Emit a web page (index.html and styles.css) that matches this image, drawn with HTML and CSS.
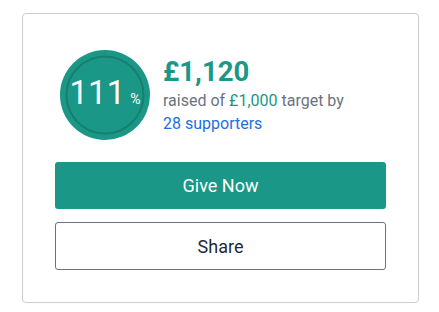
FILE: index.html
```html
<!DOCTYPE html>
<html>
<head>
<meta charset="utf-8">
<link rel="stylesheet" href="styles.css">
</head>
<body>
<div class="card">
  <div class="summary">
    <div class="progress">
      <svg class="ring" width="100" height="100" viewBox="0 0 100 100">
        <circle cx="50" cy="50" r="45" fill="#1a9786"/>
        <circle cx="50" cy="50" r="38.5" fill="none" stroke="#15806f" stroke-width="2"/>
      </svg>
      <div class="pct"><span class="num">111</span><span class="sign">%</span></div>
    </div>
    <div class="totals">
      <div class="amount">£1,120</div>
      <div class="line">raised of <span class="target">£1,000</span> target by</div>
      <div class="line"><a class="supporters" href="#">28 supporters</a></div>
    </div>
  </div>
  <div class="actions">
    <button class="btn btn-primary">Give Now</button>
    <button class="btn btn-outline">Share</button>
  </div>
</div>
</body>
</html>
```

FILE: styles.css
```css
* { box-sizing: border-box; }
html, body { margin: 0; background: #fff; }
body {
  padding: 13px 0 0 22px;
  font-family: Roboto, "Liberation Sans", sans-serif;
}
.card {
  width: 397px;
  height: 290px;
  border: 1px solid #cccccc;
  border-radius: 4px;
  padding: 31px 32px 0 32px;
}
.summary {
  display: flex;
  align-items: center;
  gap: 8px;
  height: 100px;
}
.progress {
  position: relative;
  width: 100px;
  height: 100px;
  flex: none;
}
.ring { display: block; }
.pct {
  position: absolute;
  inset: 0;
  display: flex;
  align-items: baseline;
  justify-content: center;
  padding-top: 28px;
  color: #fff;
}
.num { font-size: 33px; line-height: 40px; }
.sign { font-size: 14px; margin-left: 5px; }
.totals { display: flex; flex-direction: column; }
.amount {
  font-size: 27.5px;
  font-weight: 700;
  color: #1a9786;
  line-height: 32px;
  margin-bottom: 1px;
}
.line {
  font-size: 16px;
  line-height: 23px;
  color: #6b7280;
}
.target { color: #1a9786; }
.supporters { color: #1d6fe0; text-decoration: none; }
.actions {
  display: flex;
  flex-direction: column;
  gap: 13px;
  margin-top: 17px;
}
.btn {
  display: block;
  width: 100%;
  font-family: Roboto, "Liberation Sans", sans-serif;
  font-size: 18px;
  border-radius: 3px;
  cursor: pointer;
}
.btn-primary {
  height: 47px;
  background: #1a9786;
  color: #fff;
  border: none;
}
.btn-outline {
  height: 48px;
  background: #fff;
  color: #1f2937;
  border: 1px solid #6b7280;
}
```
